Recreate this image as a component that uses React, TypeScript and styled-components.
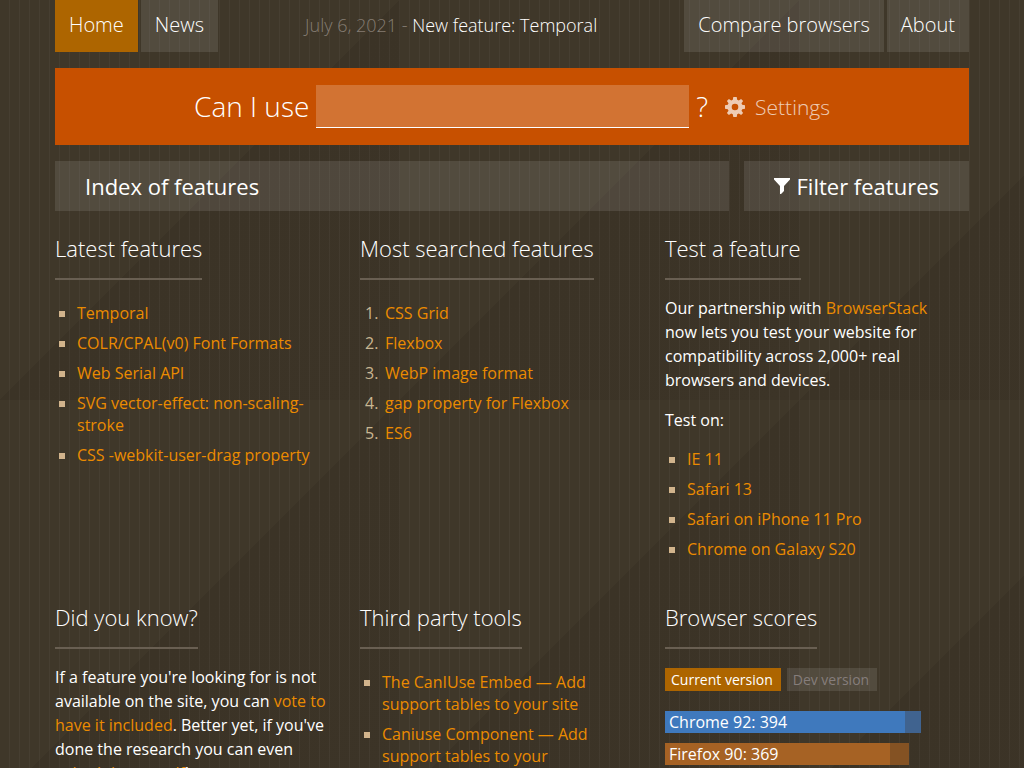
import React from "react";
import styled, { createGlobalStyle } from "styled-components";

const GlobalStyle = createGlobalStyle`
  * { box-sizing: border-box; }
  body {
    margin: 0;
    color: #fff;
    font: 16px/24px "Open Sans", sans-serif;
    background-color: #3f3729;
    background-image:
      repeating-linear-gradient(90deg, transparent 0, transparent 9px, rgba(255, 255, 255, 0.035) 9px, rgba(255, 255, 255, 0.035) 10px),
      linear-gradient(135deg, #3f3729 0%, #3f3729 50%, #3b3326 50%, #3c3427 100%);
    background-size: 400px 400px;
  }
`;

const Page = styled.div`
  padding: 0 55px;
  height: 100vh;
  overflow: hidden;
`;

const TopBar = styled.header`
  display: flex;
  justify-content: space-between;
`;

const Nav = styled.nav`
  display: flex;
  gap: 3px;
`;

const NavLink = styled.a<{ $active?: boolean }>`
  padding: 11px 14px 13px;
  font-size: 20px;
  line-height: 28px;
  font-weight: 300;
  color: #fff;
  text-decoration: none;
  background: ${(p) => (p.$active ? "#ad6500" : "rgba(255, 255, 255, 0.1)")};
`;

const Announcement = styled.p`
  margin: 0;
  padding: 13px 0;
  font-size: 18px;
  font-weight: 300;
  color: #857d73;
`;

const AnnouncementLink = styled.a`
  color: #fff;
  text-decoration: none;
`;

const SearchBar = styled.form`
  display: flex;
  align-items: center;
  justify-content: center;
  margin-top: 16px;
  height: 77px;
  background: #c75000;
  font-size: 28px;
  font-weight: 300;
`;

const SearchLabel = styled.label`
  padding-bottom: 2px;
`;

const SearchInput = styled.input`
  width: 373px;
  height: 43px;
  margin: 0 7px;
  padding: 0 8px;
  border: 0;
  border-bottom: 1px solid #fff;
  border-radius: 0;
  outline: 0;
  background: rgba(255, 255, 255, 0.2);
  color: #fff;
  font: inherit;
`;

const QuestionMark = styled.span`
  padding-bottom: 2px;
`;

const SettingsButton = styled.button`
  display: flex;
  align-items: center;
  gap: 10px;
  margin-left: 17px;
  padding: 0;
  border: 0;
  background: none;
  color: #fff;
  opacity: 0.7;
  font: 300 21px/30px "Open Sans", sans-serif;
`;

const Actions = styled.div`
  display: flex;
  gap: 15px;
  margin-top: 16px;
`;

const ActionButton = styled.button<{ $grow?: boolean }>`
  display: flex;
  align-items: center;
  gap: 6px;
  flex: ${(p) => (p.$grow ? "1" : "none")};
  height: 50px;
  padding: 0 30px;
  border: 0;
  background: rgba(255, 255, 255, 0.1);
  color: #fff;
  font: 22px/30px "Open Sans", sans-serif;
`;

const Columns = styled.main`
  display: grid;
  grid-template-columns: repeat(3, 1fr);
  column-gap: 1px;
  row-gap: 38px;
  margin-top: 22px;
`;

const Section = styled.section`
  padding-right: 20px;
`;

const Heading = styled.h2`
  width: fit-content;
  margin: 0;
  padding-bottom: 15px;
  border-bottom: 2px solid #695f52;
  font-size: 22px;
  line-height: 30px;
  font-weight: 300;
`;

const Paragraph = styled.p`
  margin: 16px 0;
`;

const Link = styled.a`
  color: #eb8b00;
  text-decoration: none;
`;

const List = styled.ul<{ $tight?: boolean }>`
  margin: ${(p) => (p.$tight ? "-4px" : "18px")} 0 0;
  padding-left: 22px;
  list-style: none;
  line-height: 22px;
`;

const Item = styled.li`
  padding: 4px 0;

  &::before {
    content: "";
    float: left;
    width: 6px;
    height: 6px;
    margin: 9px 0 0 -18px;
    background: #d2b48c;
  }
`;

const RankedList = styled.ol`
  margin: 18px 0 0;
  padding-left: 25px;
  list-style: none;
  line-height: 22px;
`;

const RankedItem = styled.li`
  padding: 4px 0;

  &::before {
    content: counter(list-item) ".";
    float: left;
    margin-left: -20px;
    color: #c9b793;
  }
`;

const Toggles = styled.div`
  display: flex;
  gap: 6px;
  margin: 19px 0 20px;
`;

const Toggle = styled.button<{ $active?: boolean }>`
  padding: 2px 8px 1px 6px;
  border: 0;
  background: ${(p) => (p.$active ? "#ad6500" : "rgba(255, 255, 255, 0.1)")};
  color: ${(p) => (p.$active ? "#fff" : "#857d7b")};
  font: 14px/20px "Open Sans", sans-serif;
`;

const Score = styled.div<{ $color: string; $rest: string }>`
  height: 22px;
  margin-bottom: 10px;
  background: ${(p) => p.$rest};

  & > div {
    height: 22px;
    padding-left: 4px;
    line-height: 22px;
    white-space: nowrap;
    background: ${(p) => p.$color};
  }
`;

const GearIcon = () => (
  <svg width="20" height="20" viewBox="0 0 20 20" fill="currentColor" aria-hidden="true">
    <path
      fillRule="evenodd"
      d="M8.300 0h3.400l.5 2.800 1.600.7L16.100 1.900l2 2-1.600 2.300.7 1.600 2.800.5v3.400l-2.800.5-.7 1.600 1.600 2.300-2 2-2.300-1.600-1.600.7-.5 2.800H8.300l-.5-2.800-1.600-.7-2.300 1.600-2-2 1.600-2.300-.7-1.600L0 11.700V8.300l2.800-.5.7-1.600L1.900 3.900l2-2 2.300 1.600 1.600-.7zM10 6.700a3.300 3.300 0 1 0 0 6.600 3.300 3.300 0 0 0 0-6.600z"
    />
  </svg>
);

const FunnelIcon = () => (
  <svg width="16" height="16" viewBox="0 0 16 16" fill="currentColor" aria-hidden="true">
    <path d="M0 0h16v1.500L10 8v5L7 16H6V8L0 1.500z" />
  </svg>
);

const latest = [
  "Temporal",
  "COLR/CPAL(v0) Font Formats",
  "Web Serial API",
  "SVG vector-effect: non-scaling-stroke",
  "CSS -webkit-user-drag property",
];
const searched = ["CSS Grid", "Flexbox", "WebP image format", "gap property for Flexbox", "ES6"];
const devices = ["IE 11", "Safari 13", "Safari on iPhone 11 Pro", "Chrome on Galaxy S20"];
const tools = [
  "The CanIUse Embed — Add support tables to your site",
  "Caniuse Component — Add support tables to your presentations",
];
const scores = [
  { label: "Chrome 92: 394", width: 256, share: 240, color: "#3f79bd", rest: "#40638f" },
  { label: "Firefox 90: 369", width: 244, share: 225, color: "#a66224", rest: "#845223" },
];

const LinkItems = ({ items }: { items: string[] }) => (
  <>
    {items.map((item) => (
      <Item key={item}>
        <Link href="#">{item}</Link>
      </Item>
    ))}
  </>
);

export default function App() {
  return (
    <Page>
      <GlobalStyle />
      <TopBar>
        <Nav>
          <NavLink href="#" $active>Home</NavLink>
          <NavLink href="#">News</NavLink>
        </Nav>
        <Announcement>
          July 6, 2021 - <AnnouncementLink href="#">New feature: Temporal</AnnouncementLink>
        </Announcement>
        <Nav>
          <NavLink href="#">Compare browsers</NavLink>
          <NavLink href="#">About</NavLink>
        </Nav>
      </TopBar>
      <SearchBar>
        <SearchLabel htmlFor="feature-search">Can I use</SearchLabel>
        <SearchInput id="feature-search" type="text" />
        <QuestionMark>?</QuestionMark>
        <SettingsButton type="button">
          <GearIcon />
          Settings
        </SettingsButton>
      </SearchBar>
      <Actions>
        <ActionButton type="button" $grow>Index of features</ActionButton>
        <ActionButton type="button">
          <FunnelIcon />
          Filter features
        </ActionButton>
      </Actions>
      <Columns>
        <Section>
          <Heading>Latest features</Heading>
          <List><LinkItems items={latest} /></List>
        </Section>
        <Section>
          <Heading>Most searched features</Heading>
          <RankedList>
            {searched.map((item) => (
              <RankedItem key={item}><Link href="#">{item}</Link></RankedItem>
            ))}
          </RankedList>
        </Section>
        <Section>
          <Heading>Test a feature</Heading>
          <Paragraph>
            Our partnership with <Link href="#">BrowserStack</Link> now lets you test your website
            for compatibility across 2,000+ real browsers and devices.
          </Paragraph>
          <Paragraph>Test on:</Paragraph>
          <List $tight><LinkItems items={devices} /></List>
        </Section>
        <Section>
          <Heading>Did you know?</Heading>
          <Paragraph>
            If a feature you're looking for is not available on the site, you can{" "}
            <Link href="#">vote to have it included</Link>. Better yet, if you've done the research
            you can even <Link href="#">submit it yourself</Link>!
          </Paragraph>
        </Section>
        <Section>
          <Heading>Third party tools</Heading>
          <List><LinkItems items={tools} /></List>
        </Section>
        <Section>
          <Heading>Browser scores</Heading>
          <Toggles>
            <Toggle type="button" $active>Current version</Toggle>
            <Toggle type="button">Dev version</Toggle>
          </Toggles>
          {scores.map((s) => (
            <Score key={s.label} $color={s.color} $rest={s.rest} style={{ width: s.width }}>
              <div style={{ width: s.share }}>{s.label}</div>
            </Score>
          ))}
        </Section>
      </Columns>
    </Page>
  );
}
